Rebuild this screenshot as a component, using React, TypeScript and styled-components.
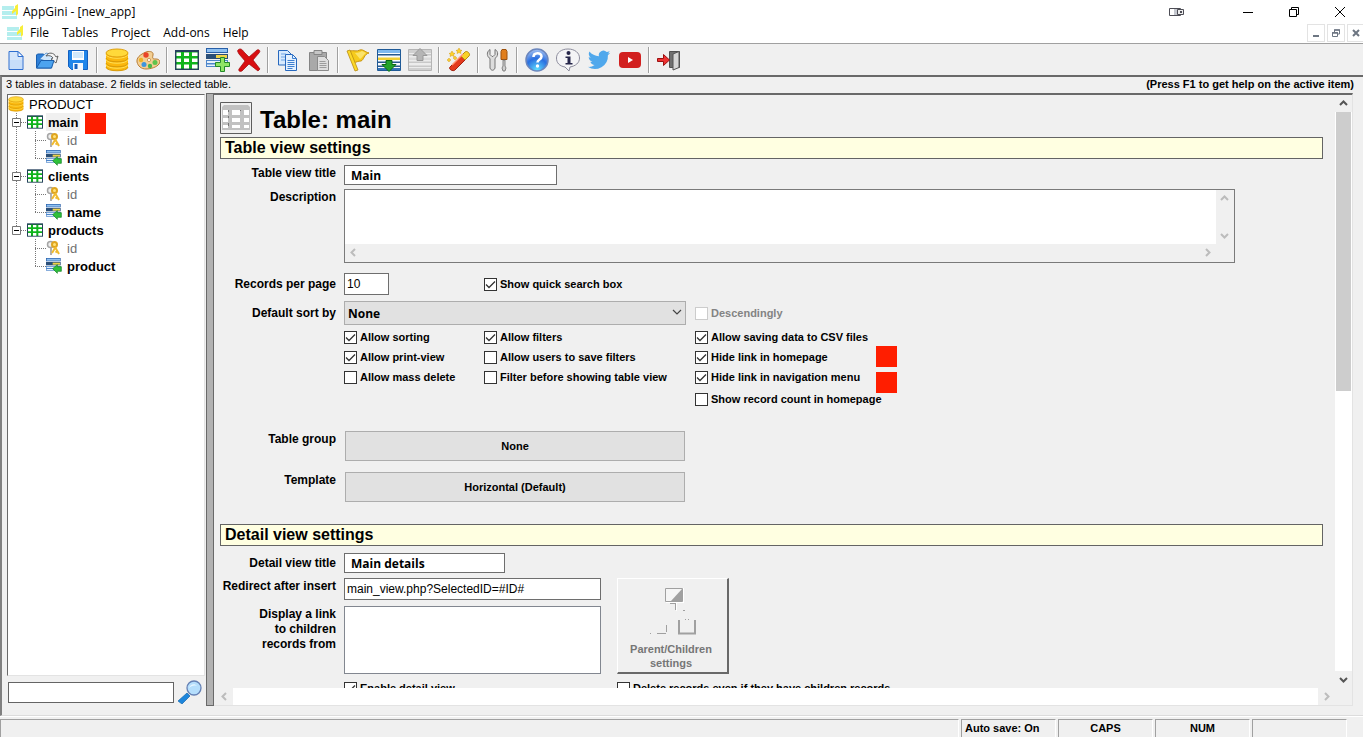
import React from "react";
import styled, { createGlobalStyle } from "styled-components";

const GlobalStyle = createGlobalStyle`
  *, *::before, *::after { box-sizing: border-box; }
  html, body, #root { height: 100%; }
  body {
    margin: 0;
    background: #f0f0f0;
    color: #000;
    font: 11px/16px "Liberation Sans", Arial, sans-serif;
    overflow: hidden;
  }
  button, input, select, textarea { font: inherit; color: inherit; margin: 0; border-radius: 0; outline: none; }
  svg { display: block; flex: none; }
`;

/* ---------- window chrome ---------- */

const Window = styled.div`
  display: flex;
  flex-direction: column;
  height: 100vh;
  min-height: 400px;
`;

const TitleBar = styled.header`
  display: flex;
  align-items: center;
  height: 23px;
  padding-left: 2px;
  background: #fff;
  font: 12px/16px "Open Sans", "Noto Sans", sans-serif;
`;

const WindowTitle = styled.h1`
  flex: 1;
  margin: 0 0 0 5px;
  font: inherit;
`;

const WindowButton = styled.button<{ $wide?: boolean }>`
  display: flex;
  align-items: center;
  justify-content: center;
  width: ${(p) => (p.$wide ? 96 : 46)}px;
  height: 22px;
  padding: 0;
  border: 0;
  background: none;
`;

const MenuBar = styled.nav`
  display: flex;
  align-items: center;
  height: 21px;
  padding-left: 7px;
  border-bottom: 1px solid #a0a0a0;
  background: #fff;
  font: 12px/16px "Open Sans", "Noto Sans", sans-serif;
`;

const MenuItems = styled.div`
  display: flex;
  flex: 1;
  gap: 13px;
  margin-left: 7px;
`;

const MenuItem = styled.button`
  padding: 0;
  border: 0;
  background: none;
`;

const ChildControls = styled.div`
  display: flex;
  gap: 2px;
  margin-right: -2px;
`;

const ChildButton = styled.button`
  display: flex;
  align-items: center;
  justify-content: center;
  width: 18px;
  height: 18px;
  padding: 0;
  border: 1px solid #e3e3e3;
  background: #fff;
`;

const Toolbar = styled.div`
  display: flex;
  align-items: center;
  height: 31px;
`;

const ToolButton = styled.button`
  display: flex;
  align-items: center;
  justify-content: center;
  width: 31px;
  height: 30px;
  padding: 0;
  border: 0;
  background: none;
`;

const ToolSeparator = styled.span`
  width: 2px;
  height: 26px;
  margin: 0 3px;
  border-left: 1px solid #a0a0a0;
  border-right: 1px solid #fff;
`;

const Client = styled.main`
  display: flex;
  flex: 1;
  flex-direction: column;
  min-height: 0;
  padding: 0 9px 9px 4px;
  border-top: 2px solid #696969;
  border-left: 2px solid #808080;
  border-bottom: 1px solid #dcdcdc;
`;

const InfoLine = styled.div`
  display: flex;
  justify-content: space-between;
  height: 16px;
  line-height: 15px;
`;

const Workspace = styled.div`
  display: flex;
  flex: 1;
  min-height: 0;
  padding-right: 1px;
`;

/* ---------- left side ---------- */

const Sidebar = styled.aside`
  display: flex;
  flex-direction: column;
  width: 200px;
`;

const Tree = styled.ul`
  flex: 1;
  margin: 1px 1px 0;
  padding: 0;
  list-style: none;
  background: #fff;
  border: 1px solid #696969;
  border-right-color: #e3e3e3;
  border-bottom-color: #e3e3e3;
  font-size: 13px;
`;

const TreeRow = styled.li`
  position: relative;
  display: flex;
  align-items: center;
  height: 18px;
`;

const Expander = styled.button`
  display: flex;
  padding: 0;
  border: 0;
  background: none;
`;

const TreeText = styled.span<{ $bold?: boolean; $muted?: boolean; $active?: boolean }>`
  margin-left: 3px;
  padding: 2px 2px 0;
  line-height: 16px;
  font-weight: ${(p) => (p.$bold ? 700 : 400)};
  color: ${(p) => (p.$muted ? "#707070" : "#000")};
  background: ${(p) => (p.$active ? "#f0f0f0" : "transparent")};
`;

const Marker = styled.span<{ $x: number; $y: number }>`
  position: absolute;
  left: ${(p) => p.$x}px;
  top: ${(p) => p.$y}px;
  width: 21px;
  height: 21px;
  background: #ff1e00;
`;

const SearchRow = styled.div`
  display: flex;
  align-items: center;
  gap: 4px;
  height: 30px;
  padding: 2px 0 0 2px;
`;

const SearchInput = styled.input`
  width: 166px;
  height: 21px;
  border: 1px solid #646464;
  background: #fff;
`;

const SearchButton = styled.button`
  padding: 0;
  border: 0;
  background: none;
`;

const Splitter = styled.div`
  width: 8px;
  border: 1px solid #696969;
  background: #b2b2b2;
`;

/* ---------- right side ---------- */

const Pane = styled.section`
  display: grid;
  flex: 1;
  grid-template: minmax(0, 1fr) 17px / minmax(0, 1fr) 17px;
  min-width: 0;
  border: 1px solid #e3e3e3;
  border-left: 0;
  border-top: 2px solid #696969;
`;

const Form = styled.form`
  overflow: hidden;
  padding: 7px 12px 0 6px;
`;

const ScrollTrack = styled.div<{ $horizontal?: boolean; $plain?: boolean; $inset?: boolean }>`
  display: flex;
  flex-direction: ${(p) => (p.$horizontal ? "row" : "column")};
  justify-content: space-between;
  margin-left: ${(p) => (p.$inset ? 2 : 0)}px;
  background: ${(p) => (p.$plain ? "#f0f0f0" : "#fff")};
`;

const ScrollButton = styled.button`
  display: flex;
  align-items: center;
  justify-content: center;
  width: 17px;
  height: 17px;
  padding: 0;
  border: 0;
  background: #f0f0f0;
`;

const ScrollThumb = styled.div`
  flex: 0 0 47%;
  margin: 0 1px auto;
  background: #cdcdcd;
`;

const PageHead = styled.div`
  display: flex;
  align-items: center;
  gap: 8px;
  height: 32px;
  margin-bottom: 3px;
`;

const PageTitle = styled.h2`
  margin: 0;
  padding-top: 3px;
  font-size: 24px;
  line-height: 28px;
`;

const SectionTitle = styled.h3<{ $top?: number }>`
  height: 22px;
  margin: ${(p) => p.$top ?? 0}px 0 0;
  padding-left: 4px;
  border: 1px solid #646464;
  background: #ffffe1;
  font-size: 16px;
  line-height: 19px;
`;

const Row = styled.div<{ $top?: number; $center?: boolean }>`
  display: grid;
  grid-template-columns: 116px minmax(0, 1fr);
  column-gap: 8px;
  align-items: ${(p) => (p.$center ? "center" : "start")};
  margin-top: ${(p) => p.$top ?? 0}px;
`;

const Label = styled.label`
  padding-top: 1px;
  font-size: 12px;
  font-weight: 700;
  line-height: 15px;
  text-align: right;
  white-space: pre-line;
`;

const Columns = styled.div`
  display: grid;
  grid-template-columns: 140px 211px minmax(0, 1fr);
  align-items: center;
`;

const TextBox = styled.input<{ $w: number; $title?: boolean }>`
  width: ${(p) => p.$w}px;
  height: ${(p) => (p.$title ? 20 : 22)}px;
  padding: 0 ${(p) => (p.$title ? 6 : 2)}px;
  border: 1px solid #6e6e6e;
  background: #fff;
  font: ${(p) =>
    p.$title ? `700 12px "Open Sans", "Noto Sans", sans-serif` : `12px "Liberation Sans", Arial, sans-serif`};
`;

const MemoFrame = styled.div`
  display: grid;
  grid-template: 1fr 17px / minmax(0, 1fr) 17px;
  height: 74px;
  margin-right: 88px;
  padding: 0 1px 1px 0;
  border: 1px solid #7a7a7a;
  background: #f0f0f0;
`;

const Memo = styled.textarea`
  resize: none;
  width: 100%;
  height: 100%;
  border: 0;
  background: #fff;
  overflow: hidden;
`;

const SelectWrap = styled.div`
  position: relative;
  grid-column: span 2;
  width: 342px;

  svg {
    position: absolute;
    top: 8px;
    right: 4px;
    pointer-events: none;
  }
`;

const Select = styled.select`
  appearance: none;
  width: 100%;
  height: 24px;
  padding: 0 3px;
  border: 1px solid #adadad;
  background: #e1e1e1;
  font: 700 12px "Open Sans", "Noto Sans", sans-serif;
`;

const CheckLabel = styled.label<{ $off?: boolean; $top?: number }>`
  position: relative;
  display: flex;
  align-items: center;
  gap: 3px;
  height: 20px;
  margin-top: ${(p) => p.$top ?? 0}px;
  font-weight: 700;
  white-space: nowrap;
  color: ${(p) => (p.$off ? "#838383" : "#000")};
`;

const CheckBoxFrame = styled.span`
  display: grid;

  > * {
    grid-area: 1 / 1;
  }

  svg {
    pointer-events: none;
    visibility: hidden;
  }

  input:checked + svg {
    visibility: visible;
  }
`;

const CheckInput = styled.input`
  appearance: none;
  width: 13px;
  height: 13px;
  border: 1px solid #333;
  background: #fff;

  &:disabled {
    border-color: #ccc;
  }
`;

const FlatButton = styled.button`
  width: 340px;
  height: 30px;
  margin-left: 1px;
  border: 1px solid #adadad;
  background: #e1e1e1;
  font-weight: 700;
`;

const DetailColumns = styled.div`
  display: flex;
  gap: 16px;
  margin-top: 5px;
`;

const DetailRows = styled.div`
  width: 381px;
`;

const ListBox = styled.select`
  appearance: none;
  width: 100%;
  height: 68px;
  border: 1px solid #828790;
  background: #fff;
`;

const RaisedButton = styled.button`
  display: flex;
  flex-direction: column;
  align-items: center;
  justify-content: flex-end;
  width: 112px;
  height: 96px;
  padding: 0 3px 2px 0;
  border: 1px solid #fff;
  border-right: 2px solid #696969;
  border-bottom: 2px solid #696969;
  background: #f0f0f0;
  color: #767676;
  font-weight: 700;
  line-height: 14px;
  white-space: pre-line;

  svg {
    margin: 0 0 3px 6px;
  }
`;

const DetailChecks = styled.div`
  display: grid;
  grid-template-columns: 273px minmax(0, 1fr);
`;

/* ---------- status bar ---------- */

const StatusBar = styled.footer`
  display: flex;
  gap: 2px;
  height: 21px;
  padding: 2px 16px 0 0;
  border-top: 1px solid #fff;
`;

const StatusCell = styled.div<{ $grow?: boolean; $left?: boolean }>`
  flex: ${(p) => (p.$grow ? "1" : "0 0 95px")};
  padding: 0 3px;
  border-top: 1px solid #a0a0a0;
  border-left: 1px solid #a0a0a0;
  border-right: 1px solid #fff;
  font-weight: 700;
  line-height: 17px;
  text-align: ${(p) => (p.$left ? "left" : "center")};
`;

/* ---------- drawings ---------- */

const AppLogo = () => (
  <svg width="16" height="16" viewBox="0 0 16 16">
    <path d="M0 2h12v4H0zM0 7h15v4H0zM0 12h15v3H0z" fill="#b4eeee" />
    <path d="M16 0v10l-2 2V7l-4 3v-3l3-3V2z" fill="#f7ee3a" />
  </svg>
);

const Icon = ({ children, size = 24 }: { children: React.ReactNode; size?: number }) => (
  <svg width={size} height={size} viewBox="0 0 24 24">
    {children}
  </svg>
);

const NewIcon = () => (
  <Icon>
    <path d="M5 3.500h9l5 5V21.500H5z" fill="#d5e6fb" stroke="#2f6fd0" />
    <path d="M6 12h12v9H6z" fill="#c6ddf9" />
    <path d="M14 3.500v5h5z" fill="#fff" stroke="#2f6fd0" />
  </Icon>
);

const OpenIcon = () => (
  <Icon>
    <path d="M1.500 7V20h15l1-12h-7l-2-2h-6z" fill="#2f80d8" stroke="#1a5fae" />
    <path d="M5 11l6-6 8 2-3 8z" fill="#cfe6fb" stroke="#5a93cf" strokeWidth=".8" />
    <path d="M11 8c2-4 8-4 10 1l2-1-2 7-5-4 2-1c-1-2-4-3-7-2z" fill="#f4f4f4" stroke="#555" strokeWidth=".9" />
    <path d="M1.500 20L6 12.500h13L16.500 20z" fill="#4ca3ef" stroke="#1a5fae" />
  </Icon>
);

const SaveIcon = () => (
  <Icon>
    <path d="M2.500 2.500h19v19h-16l-3-3z" fill="#2086ea" stroke="#125fc0" />
    <path d="M6 3h12v9H6z" fill="#fff" />
    <path d="M7 4h10v6H7z" fill="#cfe8fb" />
    <path d="M7 15h10v7H7z" fill="#f3f8fd" />
    <path d="M8.500 16h3v5h-3z" fill="#125fc0" />
  </Icon>
);

const DatabaseShapes = () => (
  <>
    <path d="M1 5v14c0 5 22 5 22 0V5z" fill="#fbb70c" />
    <path d="M1 10c0 5 22 5 22 0M1 15c0 5 22 5 22 0M1 19c0 5 22 5 22 0" fill="none" stroke="#d89a08" strokeWidth="1" />
    <path d="M1 11.500c1 5 21 5 22 0M1 6.500c1 5 21 5 22 0M1 16.500c1 5 21 5 22 0" fill="none" stroke="#ffdf55" />
    <ellipse cx="12" cy="5" rx="11" ry="4" fill="#ffd93a" stroke="#dfa010" />
  </>
);

const PaletteIcon = () => (
  <Icon>
    <path d="M1 14C0 8 8 5 10 4s8-1 7 3 0 4 3 4 5 2 3 5-8 5-13 5-8-3-9-7z" fill="#f3cf93" stroke="#b87d35" />
    <circle cx="10" cy="7" r="2.700" fill="#ea4327" />
    <circle cx="5" cy="12" r="2.200" fill="#f0b422" />
    <circle cx="8" cy="16.500" r="2.500" fill="#3d95dd" />
    <circle cx="14" cy="18" r="2.200" fill="#48b84b" />
    <circle cx="19" cy="14.500" r="2.500" fill="#61c34c" />
    <circle cx="13" cy="12" r="1.600" fill="#fff" stroke="#b87d35" strokeWidth=".7" />
  </Icon>
);

const TableShapes = () => (
  <>
    <path d="M0 2h24v20H0z" fill="#24405c" />
    <path d="M1.500 4h21v16.500h-21z" fill="#0fb41c" />
    <path d="M1.500 4.500H6V8H1.500zM9 4.500h5V8H9zM17 4.500h5.500V8H17zM1.500 10.500H6V14H1.500zM9 10.500h5V14H9zM17 10.500h5.500V14H17zM1.500 16.500H6v4H1.500zM9 16.500h5v4H9zM17 16.500h5.500v4H17z" fill="#fff" />
  </>
);

const FieldsShapes = () => (
  <>
    <path d="M0 0h22v5H0z" fill="#285fa8" />
    <path d="M1 1h20v3H1z" fill="#8fc0f0" />
    <path d="M0 6h22v5H0z" fill="#2b4f78" />
    <path d="M10 7h11v3H10z" fill="#f1d348" />
    <path d="M0 12h22v7H0z" fill="#4e86cb" />
    <path d="M1 13h20v2H1zM1 16.500h20V18H1z" fill="#e6f1fc" />
  </>
);

const AddFieldIcon = () => (
  <Icon>
    <FieldsShapes />
    <path d="M14.500 9.500h4v5h5v4h-5v5h-4v-5h-5v-4h5z" fill="#8fe566" stroke="#238a2a" />
  </Icon>
);

const DeleteIcon = () => (
  <Icon>
    <path d="M1 2c2-2 4-1 6 2l5 5 8-7c2-1 4 1 2 3l-6 7 7 9-2 2-9-7-7 7c-2 1-4 0-3-2l6-8-6-7c-1-2-2-3-1-4z" fill="#d80f12" stroke="#9c090b" strokeWidth=".7" />
  </Icon>
);

const CopyIcon = () => (
  <Icon>
    <path d="M2.500 2.500h9l4 4V17h-13z" fill="#d8eafd" stroke="#2768be" />
    <path d="M5 6h5M5 9h7M5 12h4" stroke="#6ea4e6" />
    <path d="M9.500 6.500h7l4 4v12h-11z" fill="#e5f1fe" stroke="#2768be" />
    <path d="M16.500 6.500v4h4M11.500 12.500h7M11.500 14.500h7M11.500 16.500h7M11.500 18.500h7M11.500 20.500h5" fill="none" stroke="#3f80d0" />
  </Icon>
);

const PasteIcon = () => (
  <Icon>
    <path d="M2.500 4.500h17v18h-17z" fill="#a9a9a9" stroke="#858585" />
    <path d="M7 2.500h8v4H7z" fill="#c6c6c6" stroke="#858585" />
    <path d="M10.500 8.500h7l4 4v10h-11z" fill="#dedede" stroke="#8b8b8b" />
    <path d="M12.500 13.500h6M12.500 15.500h7M12.500 17.500h7M12.500 19.500h7" stroke="#9c9c9c" />
  </Icon>
);

const FlagIcon = () => (
  <Icon>
    <path d="M4 3c4-1 6 1 10-1 3-1 5 2 9 3-5 1-5 7-8 8-3 0-4 1-8 2z" fill="#f6cb1c" stroke="#c99512" />
    <path d="M9 5c3 0 5-1 7-2l4 2c-3 2-4 5-6 6z" fill="#fbe36c" />
    <path d="M1 3l3-1 8 20-3 1z" fill="#fbd928" stroke="#b98a12" strokeWidth=".8" />
  </Icon>
);

const StripesShapes = ({ gray }: { gray?: boolean }) => (
  <>
    <path d="M.500 1.500h23v21H.500z" fill={gray ? "#ececec" : "#f8fcff"} stroke={gray ? "#b5b5b5" : "#1f5a97"} />
    <path d="M1 2h22v3H1z" fill={gray ? "#d0d0d0" : "#7fb9ef"} />
    <path d="M1 6h22v1.500H1zM1 13.500h22V15H1zM1 17.500h22V19H1z" fill={gray ? "#c8c8c8" : "#27598f"} />
    <path d="M1 9.500h22v2.500H1z" fill={gray ? "#dadada" : "#f2cf35"} />
    <path d="M1 20h22v2H1z" fill={gray ? "#d0d0d0" : "#3575ba"} />
  </>
);

const ImportIcon = () => (
  <Icon>
    <StripesShapes />
    <path d="M9 12.500h6v4h4l-7 7-7-7h4z" fill="#23a32c" stroke="#0a6a14" />
  </Icon>
);

const ExportIcon = () => (
  <Icon>
    <StripesShapes gray />
    <path d="M12 .500l7 7h-4v5H9v-5H5z" fill="#b5b5b5" stroke="#999" />
  </Icon>
);

const WandIcon = () => (
  <Icon>
    <path d="M3 19L17 5l4 4L8 22c-2 2-7-1-5-3z" fill="#e33a1e" stroke="#a32210" />
    <path d="M14 8l4-4c2-2 6 2 4 4l-4 4z" fill="#f8d228" stroke="#b98b10" />
    <path d="M5 17L16 6" stroke="#ff9977" strokeWidth="1.500" />
    <path d="M5 3l1 2 2 .500-1.500 1 .500 2-2-1-2 1 .500-2L2 5.500 4 5zM12 0l1 2 2 .500-1.500 1 .500 2-2-1-2 1 .500-2-1.500-1 2-.500zM2 10l.700 1.300 1.300.700-1.300.700L2 14l-.700-1.300L0 12l1.300-.700zM8 8l.700 1.300 1.300.700-1.300.700L8 12l-.700-1.300L6 10l1.300-.700z" fill="#ffd326" stroke="#d39a10" strokeWidth=".5" />
  </Icon>
);

const ToolsIcon = () => (
  <Icon>
    <path d="M4 1.500v5l2 2h1l2-2v-5c4 2 3 7 0 9V20c-1 3-4 3-5 0v-9.500C1 9 0 4 4 1.500z" fill="#dcdcdc" stroke="#757575" />
    <path d="M16 1.500h4l1 2v8h-6v-8z" fill="#e07e1c" stroke="#9d500b" />
    <path d="M17 12h2v6l1 2-1 3h-2l-1-3 1-2z" fill="#d0d0d0" stroke="#6c6c6c" strokeWidth=".8" />
  </Icon>
);

const HelpIcon = () => (
  <Icon>
    <defs>
      <radialGradient id="helpFill" cx=".5" cy=".95" r=".95">
        <stop offset="0" stopColor="#5fe0ff" />
        <stop offset=".55" stopColor="#2a6fe0" />
        <stop offset="1" stopColor="#a9c4f2" />
      </radialGradient>
    </defs>
    <circle cx="12" cy="12" r="11" fill="url(#helpFill)" stroke="#6b86bd" strokeWidth="1.500" />
    <path d="M8.500 9c0-5 8-5 8-.500 0 3-4 3-4 6" fill="none" stroke="#fff" strokeWidth="2.600" />
    <circle cx="12.500" cy="18" r="1.700" fill="#fff" />
  </Icon>
);

const InfoIcon = () => (
  <Icon>
    <path d="M12 1c7 0 11.500 4 11.500 9 0 5-4 8-9.500 9l-1 4-4-4C3.500 18 .500 15 .500 10 .500 5 5 1 12 1z" fill="#f4f4f6" stroke="#8c8c9c" />
    <circle cx="12.500" cy="5" r="2" fill="#26264a" />
    <path d="M9.500 8.500h5V15h2v1.500h-7V15h2v-5h-2z" fill="#26264a" />
  </Icon>
);

const TwitterIcon = () => (
  <Icon>
    <path d="M23.200 4.800c-.800.400-1.700.600-2.600.700.900-.600 1.700-1.400 2-2.500-.900.500-1.900.900-2.900 1.100a4.600 4.600 0 0 0-7.800 4.200C8.100 8.100 4.700 6.300 2.400 3.500c-1.200 2.100-.600 4.800 1.400 6.100-.700 0-1.400-.200-2.100-.600 0 2.200 1.500 4.100 3.700 4.600-.700.200-1.400.200-2.100.100.600 1.800 2.300 3.100 4.300 3.200A9.200 9.200 0 0 1 .800 18.800 13 13 0 0 0 20.900 7.200c.900-.600 1.700-1.500 2.300-2.400z" fill="#50a8ec" />
  </Icon>
);

const YoutubeIcon = () => (
  <Icon>
    <rect x="1" y="4" width="22" height="16" rx="4" fill="#d2201f" />
    <path d="M10 9l5 3-5 3z" fill="#fff" />
  </Icon>
);

const ExitIcon = () => (
  <Icon>
    <path d="M12.500 3.500h10v16h-10z" fill="#707070" stroke="#505050" />
    <path d="M16 6l6-2.500v16L16 22z" fill="#d6d6d6" stroke="#555" />
    <path d="M.500 10.500h6v-4l6 5.500-6 5.500v-4h-6z" fill="#ee3232" stroke="#9c1010" />
  </Icon>
);

const KeyIcon = () => (
  <svg width="16" height="16" viewBox="0 0 16 16">
    <circle cx="4.500" cy="4.500" r="3" fill="#eee" stroke="#a5a5a5" strokeWidth="1.500" />
    <path d="M5 8v7" stroke="#b0b0b0" strokeWidth="2" />
    <circle cx="8.500" cy="4.500" r="2.500" fill="#ffe27a" stroke="#dfa520" strokeWidth="2" />
    <path d="M9 7l4 7M9 8l-3 5M11.500 11l-2 1.500" stroke="#f0bb30" strokeWidth="2" />
  </svg>
);

const FieldIcon = () => (
  <Icon size={16}>
    <FieldsShapes />
    <path d="M10 16l7-6v3h6v7h-6v3z" fill="#2fc03a" stroke="#0c7f1c" />
  </Icon>
);

const MagnifierIcon = () => (
  <Icon>
    <path d="M9 13l3 3-8 8-4-3z" fill="#1d86dc" stroke="#1467ae" strokeWidth=".7" />
    <circle cx="16" cy="8" r="7" fill="#b5defc" stroke="#6580b4" strokeWidth="1.300" />
    <path d="M11 8c1-4 6-5 8-2-3-1-6 0-8 2z" fill="#e6f5ff" />
  </Icon>
);

const GrayTableIcon = () => (
  <svg width="32" height="32" viewBox="0 0 32 32">
    <path d="M.500.500h31v31H.500z" fill="#f0f0f0" stroke="#5d5d5d" />
    <path d="M2 5l2-2h24l2 2v23H2z" fill="#c1c1c1" />
    <path d="M3 8h5v5H3zM12 8h8v5h-8zM24 8h5v5h-5zM3 16h5v4H3zM12 16h8v4h-8zM24 16h5v4h-5zM3 23h5v3H3zM12 23h8v3h-8zM24 23h5v3h-5z" fill="#fff" />
    <path d="M8.500 8v2M8.500 14v2M8.500 21v3M20.500 8v1" stroke="#777" />
  </svg>
);

const RelationIcon = () => (
  <svg width="52" height="52" viewBox="0 0 52 52">
    <path d="M17.500 1.500h17v13h-17z" fill="#f5f5f5" stroke="#a0a0a0" />
    <path d="M34 2v12H23z" fill="#a0a0a0" />
    <path d="M18 15.500h18M28.500 16v8M35.500 1v14" stroke="#fff" />
    <path d="M22 16.500h6M27.500 16v7M35 23.500h2M18.500 38v7M2 46.500h1M9 46.500h9" stroke="#a0a0a0" />
    <path d="M31 33v13.500h16V33" fill="none" stroke="#a0a0a0" strokeWidth="2" />
    <path d="M37 32.500h1M40 32.500h1" stroke="#a0a0a0" />
  </svg>
);

const arrowPaths = {
  up: "M1 6l3.500-3.500L8 6",
  down: "M1 3l3.500 3.500L8 3",
  left: "M6 1L2.500 4.500 6 8",
  right: "M3 1l3.500 3.500L3 8",
};

const Arrow = ({ dir, dim }: { dir: keyof typeof arrowPaths; dim?: boolean }) => (
  <svg width="9" height="9" viewBox="0 0 9 9">
    <path d={arrowPaths[dir]} fill="none" stroke={dim ? "#bcbcbc" : "#555"} strokeWidth="2" />
  </svg>
);

const BranchLines = ({ last }: { last?: boolean }) => (
  <svg width="19" height="18" viewBox="0 0 19 18">
    <path d={last ? "M8.500 0v9M13 9.500h6" : "M8.500 0v18M13 9.500h6"} stroke="#777" strokeDasharray="1 1" />
    <path d="M4.500 5.500h8v8h-8z" fill="#fff" stroke="#777" />
    <path d="M6 9.500h5" stroke="#000" />
  </svg>
);

const LeafLines = ({ last, trunk }: { last?: boolean; trunk?: boolean }) => (
  <svg width="38" height="18" viewBox="0 0 38 18">
    {trunk && <path d="M8.500 0v18" stroke="#777" strokeDasharray="1 1" />}
    <path d={`M27.500 0v${last ? 9 : 18}M27 9.500h11`} stroke="#777" strokeDasharray="1 1" />
  </svg>
);

/* ---------- composed parts ---------- */

const toolGroups: [string, React.ReactNode][][] = [
  [["New", <NewIcon />], ["Open", <OpenIcon />], ["Save", <SaveIcon />]],
  [["Database", <Icon><DatabaseShapes /></Icon>], ["Theme", <PaletteIcon />]],
  [["New table", <Icon><TableShapes /></Icon>], ["New field", <AddFieldIcon />], ["Delete", <DeleteIcon />]],
  [["Copy", <CopyIcon />], ["Paste", <PasteIcon />]],
  [["Flag", <FlagIcon />], ["Move down", <ImportIcon />], ["Move up", <ExportIcon />]],
  [["Generate", <WandIcon />]],
  [["Preferences", <ToolsIcon />]],
  [["Help", <HelpIcon />], ["About", <InfoIcon />], ["Twitter", <TwitterIcon />], ["YouTube", <YoutubeIcon />]],
  [["Exit", <ExitIcon />]],
];

const tables = [
  { name: "main", field: "main", active: true },
  { name: "clients", field: "name" },
  { name: "products", field: "product" },
];

type CheckProps = { text: string; on?: boolean; off?: boolean; top?: number; children?: React.ReactNode };

const Check = ({ text, on, off, top, children }: CheckProps) => (
  <CheckLabel $off={off} $top={top}>
    <CheckBoxFrame>
      <CheckInput type="checkbox" defaultChecked={on} disabled={off} />
      <svg width="13" height="13" viewBox="0 0 13 13">
        <path d="M2 6.500l3 3 6-6" fill="none" stroke="#333" strokeWidth="1.300" />
      </svg>
    </CheckBoxFrame>
    {text}
    {children}
  </CheckLabel>
);

export default function App() {
  return (
    <Window>
      <GlobalStyle />
      <TitleBar>
        <AppLogo />
        <WindowTitle>AppGini - [new_app]</WindowTitle>
        <WindowButton $wide aria-label="Display">
          <svg width="16" height="10" viewBox="0 0 16 10">
            <path d="M.500 1.500h11v7H.500z" fill="#fff" stroke="#4d4d55" />
            <path d="M5 2h5v6H5z" fill="#c5c8cf" />
            <path d="M8.500 2.500h6v5h-6z" fill="#eee" stroke="#4d4d55" />
            <path d="M11 4h2v2h-2z" fill="#4d4d55" />
          </svg>
        </WindowButton>
        <WindowButton aria-label="Minimize">
          <svg width="10" height="10" viewBox="0 0 10 10"><path d="M0 5.500h10" stroke="#000" /></svg>
        </WindowButton>
        <WindowButton aria-label="Restore">
          <svg width="10" height="10" viewBox="0 0 10 10">
            <path d="M.500 2.500h7v7h-7zM2.500 2V.500h7v7H8" fill="none" stroke="#000" />
          </svg>
        </WindowButton>
        <WindowButton aria-label="Close">
          <svg width="10" height="10" viewBox="0 0 10 10"><path d="M0 0l10 10M10 0L0 10" stroke="#000" /></svg>
        </WindowButton>
      </TitleBar>

      <MenuBar>
        <AppLogo />
        <MenuItems>
          {["File", "Tables", "Project", "Add-ons", "Help"].map((m) => (
            <MenuItem key={m}>{m}</MenuItem>
          ))}
        </MenuItems>
        <ChildControls>
          <ChildButton aria-label="Minimize child">
            <svg width="8" height="8" viewBox="0 0 8 8"><path d="M1 7h6" stroke="#6d7682" strokeWidth="2" /></svg>
          </ChildButton>
          <ChildButton aria-label="Restore child">
            <svg width="8" height="8" viewBox="0 0 8 8">
              <path d="M.500 3.500h5v4h-5zM2.500 3V1h5v4H6" fill="none" stroke="#6d7682" />
              <path d="M0 4h6M2 1h6" stroke="#6d7682" strokeWidth="1.500" />
            </svg>
          </ChildButton>
          <ChildButton aria-label="Close child">
            <svg width="8" height="8" viewBox="0 0 8 8">
              <path d="M1 1l6 6M7 1L1 7" stroke="#6d7682" strokeWidth="2" />
            </svg>
          </ChildButton>
        </ChildControls>
      </MenuBar>

      <Toolbar role="toolbar">
        {toolGroups.map((group, i) => (
          <React.Fragment key={i}>
            {i > 0 && <ToolSeparator />}
            {group.map(([name, icon]) => (
              <ToolButton key={name} aria-label={name}>{icon}</ToolButton>
            ))}
          </React.Fragment>
        ))}
      </Toolbar>

      <Client>
        <InfoLine>
          <span>3 tables in database. 2 fields in selected table.</span>
          <b>(Press F1 to get help on the active item)</b>
        </InfoLine>
        <Workspace>
          <Sidebar>
            <Tree>
              <TreeRow>
                <Icon size={16}><DatabaseShapes /></Icon>
                <TreeText>PRODUCT</TreeText>
              </TreeRow>
              {tables.map((t, i) => {
                const last = i === tables.length - 1;
                return (
                  <React.Fragment key={t.name}>
                    <TreeRow>
                      <Expander aria-label={`Collapse ${t.name}`}><BranchLines last={last} /></Expander>
                      <Icon size={16}><TableShapes /></Icon>
                      <TreeText $bold $active={t.active}>{t.name}</TreeText>
                      {t.active && <Marker $x={77} $y={0} />}
                    </TreeRow>
                    <TreeRow>
                      <LeafLines trunk={!last} />
                      <KeyIcon />
                      <TreeText $muted>id</TreeText>
                    </TreeRow>
                    <TreeRow>
                      <LeafLines trunk={!last} last />
                      <FieldIcon />
                      <TreeText $bold>{t.field}</TreeText>
                    </TreeRow>
                  </React.Fragment>
                );
              })}
            </Tree>
            <SearchRow>
              <SearchInput type="text" aria-label="Find" />
              <SearchButton aria-label="Search"><MagnifierIcon /></SearchButton>
            </SearchRow>
          </Sidebar>
          <Splitter />
          <Pane>
            <Form onSubmit={(e) => e.preventDefault()}>
              <PageHead>
                <GrayTableIcon />
                <PageTitle>Table: main</PageTitle>
              </PageHead>

              <SectionTitle>Table view settings</SectionTitle>
              <Row $top={6}>
                <Label htmlFor="tvTitle">Table view title</Label>
                <TextBox id="tvTitle" $w={213} $title defaultValue="Main" />
              </Row>
              <Row $top={4}>
                <Label htmlFor="description">Description</Label>
                <MemoFrame>
                  <Memo id="description" />
                  <ScrollTrack $plain>
                    <ScrollButton type="button" aria-label="Up"><Arrow dir="up" dim /></ScrollButton>
                    <ScrollButton type="button" aria-label="Down"><Arrow dir="down" dim /></ScrollButton>
                  </ScrollTrack>
                  <ScrollTrack $horizontal $plain>
                    <ScrollButton type="button" aria-label="Left"><Arrow dir="left" dim /></ScrollButton>
                    <ScrollButton type="button" aria-label="Right"><Arrow dir="right" dim /></ScrollButton>
                  </ScrollTrack>
                </MemoFrame>
              </Row>
              <Row $top={10} $center>
                <Label htmlFor="perPage">Records per page</Label>
                <Columns>
                  <TextBox id="perPage" $w={45} defaultValue="10" />
                  <Check text="Show quick search box" on />
                </Columns>
              </Row>
              <Row $top={6} $center>
                <Label htmlFor="sortBy">Default sort by</Label>
                <Columns>
                  <SelectWrap>
                    <Select id="sortBy"><option>None</option></Select>
                    <svg width="10" height="7" viewBox="0 0 10 7">
                      <path d="M1 1l4 4 4-4" fill="none" stroke="#444" strokeWidth="1.200" />
                    </svg>
                  </SelectWrap>
                  <Check text="Descendingly" off />
                </Columns>
              </Row>
              <Row $top={2}>
                <span />
                <Columns>
                  <Check text="Allow sorting" on />
                  <Check text="Allow filters" on />
                  <Check text="Allow saving data to CSV files" on />
                  <Check text="Allow print-view" on />
                  <Check text="Allow users to save filters" />
                  <Check text="Hide link in homepage" on><Marker $x={181} $y={-1} /></Check>
                  <Check text="Allow mass delete" />
                  <Check text="Filter before showing table view" />
                  <Check text="Hide link in navigation menu" on><Marker $x={181} $y={5} /></Check>
                  <span />
                  <span />
                  <Check text="Show record count in homepage" top={2} />
                </Columns>
              </Row>
              <Row $top={22}>
                <Label htmlFor="tableGroup">Table group</Label>
                <FlatButton id="tableGroup" type="button">None</FlatButton>
              </Row>
              <Row $top={11}>
                <Label htmlFor="template">Template</Label>
                <FlatButton id="template" type="button">Horizontal (Default)</FlatButton>
              </Row>

              <SectionTitle $top={22}>Detail view settings</SectionTitle>
              <Row $top={7} $center>
                <Label htmlFor="dvTitle">Detail view title</Label>
                <TextBox id="dvTitle" $w={161} $title defaultValue="Main details" />
              </Row>
              <DetailColumns>
                <DetailRows>
                  <Row>
                    <Label htmlFor="redirect">Redirect after insert</Label>
                    <TextBox id="redirect" $w={257} defaultValue="main_view.php?SelectedID=#ID#" />
                  </Row>
                  <Row $top={6}>
                    <Label htmlFor="children">{"Display a link\nto children\nrecords from"}</Label>
                    <ListBox id="children" size={4} />
                  </Row>
                </DetailRows>
                <RaisedButton type="button" disabled>
                  <RelationIcon />
                  <span>{"Parent/Children\nsettings"}</span>
                </RaisedButton>
              </DetailColumns>
              <Row $top={4}>
                <span />
                <DetailChecks>
                  <Check text="Enable detail view" on />
                  <Check text="Delete records even if they have children records" />
                </DetailChecks>
              </Row>
            </Form>
            <ScrollTrack>
              <ScrollButton aria-label="Scroll up"><Arrow dir="up" /></ScrollButton>
              <ScrollThumb />
              <ScrollButton aria-label="Scroll down"><Arrow dir="down" /></ScrollButton>
            </ScrollTrack>
            <ScrollTrack $horizontal $inset>
              <ScrollButton aria-label="Scroll left"><Arrow dir="left" dim /></ScrollButton>
              <ScrollButton aria-label="Scroll right"><Arrow dir="right" dim /></ScrollButton>
            </ScrollTrack>
          </Pane>
        </Workspace>
      </Client>

      <StatusBar>
        <StatusCell $grow />
        <StatusCell $left>Auto save: On</StatusCell>
        <StatusCell>CAPS</StatusCell>
        <StatusCell>NUM</StatusCell>
        <StatusCell />
      </StatusBar>
    </Window>
  );
}
